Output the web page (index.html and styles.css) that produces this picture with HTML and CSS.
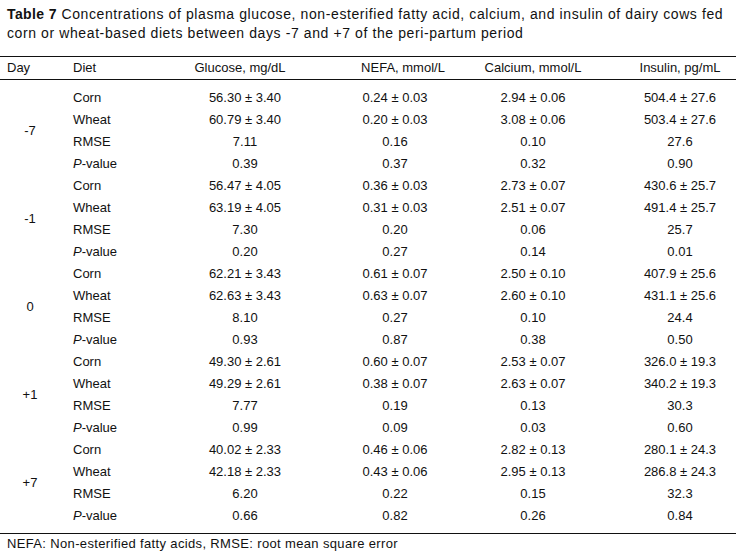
FILE: index.html
```html
<!DOCTYPE html>
<html lang="en">
<head>
<meta charset="utf-8">
<title>Table 7</title>
<link rel="stylesheet" href="styles.css">
</head>
<body>
<p class="caption"><b class="label">Table 7</b> Concentrations of plasma glucose, non-esterified fatty acid, calcium, and insulin of dairy cows fed corn or wheat-based diets between days -7 and +7 of the peri-partum period</p>
<table class="data">
  <colgroup>
    <col class="w-day"><col class="w-diet"><col class="w-glu"><col class="w-nefa"><col class="w-ca"><col class="w-ins">
  </colgroup>
  <thead>
    <tr>
      <th class="h-day">Day</th>
      <th class="h-diet">Diet</th>
      <th class="h-glu">Glucose, mg/dL</th>
      <th class="h-nefa">NEFA, mmol/L</th>
      <th class="h-ca">Calcium, mmol/L</th>
      <th class="h-ins">Insulin, pg/mL</th>
    </tr>
  </thead>
  <tbody>
    <tr class="first"><td class="day" rowspan="4">-7</td><td class="diet">Corn</td><td class="glu">56.30 ± 3.40</td><td class="nefa">0.24 ± 0.03</td><td class="ca">2.94 ± 0.06</td><td class="ins">504.4 ± 27.6</td></tr>
    <tr><td class="diet">Wheat</td><td class="glu">60.79 ± 3.40</td><td class="nefa">0.20 ± 0.03</td><td class="ca">3.08 ± 0.06</td><td class="ins">503.4 ± 27.6</td></tr>
    <tr><td class="diet">RMSE</td><td class="glu">7.11</td><td class="nefa">0.16</td><td class="ca">0.10</td><td class="ins">27.6</td></tr>
    <tr><td class="diet"><i>P</i>-value</td><td class="glu">0.39</td><td class="nefa">0.37</td><td class="ca">0.32</td><td class="ins">0.90</td></tr>

    <tr><td class="day" rowspan="4">-1</td><td class="diet">Corn</td><td class="glu">56.47 ± 4.05</td><td class="nefa">0.36 ± 0.03</td><td class="ca">2.73 ± 0.07</td><td class="ins">430.6 ± 25.7</td></tr>
    <tr><td class="diet">Wheat</td><td class="glu">63.19 ± 4.05</td><td class="nefa">0.31 ± 0.03</td><td class="ca">2.51 ± 0.07</td><td class="ins">491.4 ± 25.7</td></tr>
    <tr><td class="diet">RMSE</td><td class="glu">7.30</td><td class="nefa">0.20</td><td class="ca">0.06</td><td class="ins">25.7</td></tr>
    <tr><td class="diet"><i>P</i>-value</td><td class="glu">0.20</td><td class="nefa">0.27</td><td class="ca">0.14</td><td class="ins">0.01</td></tr>

    <tr><td class="day" rowspan="4">0</td><td class="diet">Corn</td><td class="glu">62.21 ± 3.43</td><td class="nefa">0.61 ± 0.07</td><td class="ca">2.50 ± 0.10</td><td class="ins">407.9 ± 25.6</td></tr>
    <tr><td class="diet">Wheat</td><td class="glu">62.63 ± 3.43</td><td class="nefa">0.63 ± 0.07</td><td class="ca">2.60 ± 0.10</td><td class="ins">431.1 ± 25.6</td></tr>
    <tr><td class="diet">RMSE</td><td class="glu">8.10</td><td class="nefa">0.27</td><td class="ca">0.10</td><td class="ins">24.4</td></tr>
    <tr><td class="diet"><i>P</i>-value</td><td class="glu">0.93</td><td class="nefa">0.87</td><td class="ca">0.38</td><td class="ins">0.50</td></tr>

    <tr><td class="day" rowspan="4">+1</td><td class="diet">Corn</td><td class="glu">49.30 ± 2.61</td><td class="nefa">0.60 ± 0.07</td><td class="ca">2.53 ± 0.07</td><td class="ins">326.0 ± 19.3</td></tr>
    <tr><td class="diet">Wheat</td><td class="glu">49.29 ± 2.61</td><td class="nefa">0.38 ± 0.07</td><td class="ca">2.63 ± 0.07</td><td class="ins">340.2 ± 19.3</td></tr>
    <tr><td class="diet">RMSE</td><td class="glu">7.77</td><td class="nefa">0.19</td><td class="ca">0.13</td><td class="ins">30.3</td></tr>
    <tr><td class="diet"><i>P</i>-value</td><td class="glu">0.99</td><td class="nefa">0.09</td><td class="ca">0.03</td><td class="ins">0.60</td></tr>

    <tr><td class="day" rowspan="4">+7</td><td class="diet">Corn</td><td class="glu">40.02 ± 2.33</td><td class="nefa">0.46 ± 0.06</td><td class="ca">2.82 ± 0.13</td><td class="ins">280.1 ± 24.3</td></tr>
    <tr><td class="diet">Wheat</td><td class="glu">42.18 ± 2.33</td><td class="nefa">0.43 ± 0.06</td><td class="ca">2.95 ± 0.13</td><td class="ins">286.8 ± 24.3</td></tr>
    <tr><td class="diet">RMSE</td><td class="glu">6.20</td><td class="nefa">0.22</td><td class="ca">0.15</td><td class="ins">32.3</td></tr>
    <tr class="last"><td class="diet"><i>P</i>-value</td><td class="glu">0.66</td><td class="nefa">0.82</td><td class="ca">0.26</td><td class="ins">0.84</td></tr>
  </tbody>
</table>
<p class="note">NEFA: Non-esterified fatty acids, RMSE: root mean square error</p>
</body>
</html>
```

FILE: styles.css
```css
html, body {
  margin: 0;
  padding: 0;
  background: #ffffff;
}

body {
  font-family: "Liberation Sans", Arial, sans-serif;
  font-size: 13px;
  color: #111111;
  width: 736px;
}

.caption {
  margin: 0;
  padding: 5px 7px 0 7px;
  line-height: 19px;
  font-size: 14px;
  letter-spacing: 0.6px;
}

.label {
  letter-spacing: 0.4px;
}

.data {
  margin-top: 13px;
  width: 736px;
  border-collapse: collapse;
  table-layout: fixed;
}

.w-day { width: 54px; }
.w-diet { width: 108px; }
.w-glu { width: 150px; }
.w-nefa { width: 149px; }
.w-ca { width: 148px; }
.w-ins { width: 127px; }

.data thead th {
  font-weight: normal;
  height: 22px;
  padding: 0;
  line-height: 22px;
  border-top: 1px solid #111111;
  border-bottom: 1px solid #111111;
  text-align: center;
  white-space: nowrap;
}

.data td {
  height: 22px;
  padding: 0;
  line-height: 22px;
  white-space: nowrap;
  text-align: center;
}

.data thead th.h-day { text-align: left; padding-left: 7px; }
.data thead th.h-diet { text-align: left; padding-left: 19px; }
.data thead th.h-glu { padding-left: 6px; }
.data thead th.h-nefa { padding-left: 33px; }
.data thead th.h-ca { padding-right: 4px; }
.data thead th.h-ins { padding-left: 15px; }

.data td.day { padding-left: 6px; vertical-align: middle; }
.data td.diet { text-align: left; padding-left: 19px; }
.data td.glu { padding-left: 16px; }
.data td.nefa { padding-left: 17px; }
.data td.ca { padding-right: 4px; }
.data td.ins { padding-left: 15px; }

.data tr.first td { padding-top: 7px; }
.data tr.last td { padding-bottom: 6px; border-bottom: 1px solid #111111; }
.data tbody tr:nth-last-child(4) td.day { border-bottom: 1px solid #111111; padding-bottom: 6px; }

.note {
  margin: 0;
  padding: 0 7px;
  line-height: 19px;
  letter-spacing: 0.35px;
}
```
